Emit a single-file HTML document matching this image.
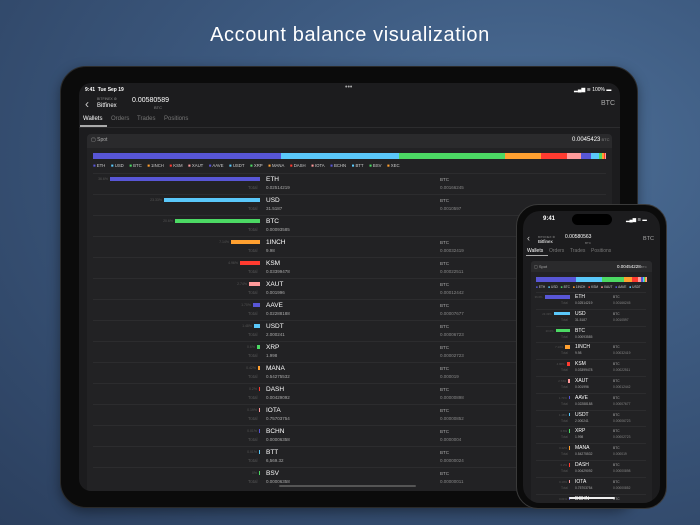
<!DOCTYPE html><html><head><meta charset="utf-8"><style>
*{margin:0;padding:0;box-sizing:border-box}
body{width:700px;height:525px;overflow:hidden;position:relative;font-family:"Liberation Sans",sans-serif;background:radial-gradient(ellipse at 75% 30%,#4d6f97 0%,#3d5a80 40%,#2b3f5e 100%)}
.a{position:absolute}
.t{color:#fff;white-space:nowrap}
#leg span.i{margin-right:5.5px}
#pleg span.i{margin-right:3px}
</style></head><body>
<div class="a t" style="left:0;width:700px;top:24px;text-align:center;font-size:20px;letter-spacing:.6px">Account balance visualization</div>
<!-- iPad -->
<div class="a" style="left:60px;top:66px;width:578px;height:442px;background:#0b0b0b;border-radius:26px;box-shadow:0 4px 12px rgba(0,0,0,.4);border:1px solid #2a2a2a"></div>
<div class="a" style="left:79px;top:83px;width:541px;height:408px;background:#1c1c1e;border-radius:12px;overflow:hidden" id="ip">
 <div class="a t" style="left:6px;top:4px;font-size:5px;font-weight:bold">9:41 &nbsp;Tue Sep 19</div>
 <div class="a t" style="left:266px;top:1px;font-size:7px;color:#aaa">•••</div>
 <div class="a t" style="left:495px;top:4px;font-size:5px">▂▄▆ ≋ 100% ▬</div>
 <div class="a t" style="left:6px;top:14px;font-size:12px;color:#ccc">‹</div>
 <div class="a t" style="left:18px;top:14px;font-size:3.5px;color:#888">BITFINEX ⚙</div>
 <div class="a t" style="left:18px;top:20px;font-size:6px">Bitfinex</div>
 <div class="a t" style="left:53px;top:14px;font-size:7px">0.00580589</div>
 <div class="a t" style="left:75px;top:22px;font-size:4px;color:#888">BTC</div>
 <div class="a t" style="left:522px;top:17px;font-size:7px;color:#aaa">BTC</div>
 <div class="a t" style="left:4px;top:33px;font-size:6px">Wallets</div>
 <div class="a t" style="left:32px;top:33px;font-size:6px;color:#777">Orders</div>
 <div class="a t" style="left:58px;top:33px;font-size:6px;color:#777">Trades</div>
 <div class="a t" style="left:85px;top:33px;font-size:6px;color:#777">Positions</div>
 <div class="a" style="left:1px;top:42px;width:27px;height:1.5px;background:#aaa"></div>
 <div class="a" style="left:0;top:44px;width:541px;height:1px;background:#2c2c2e"></div>
 <div class="a" style="left:8px;top:51px;width:525px;height:360px;background:#222224;border-radius:4px"></div>
 <div class="a" style="left:8px;top:51px;width:525px;height:14px;background:#2a2a2c;border-radius:4px 4px 0 0"></div>
 <div class="a t" style="left:12px;top:54px;font-size:5px;color:#aaa">▢ Spot</div>
 <div class="a t" style="left:493px;top:54px;font-size:6px">0.0045423<span style="font-size:4px;color:#888"> BTC</span></div>
 <div class="a" id="bigbar" style="left:14px;top:70px;width:513px;height:6px;display:flex"></div>
 <div class="a t" id="leg" style="left:14px;top:80px;font-size:4.3px;color:#ccc"></div>
 <div id="rows"></div>
 <div class="a" style="left:200px;top:402px;width:137px;height:2px;background:#555;border-radius:1px"></div>
</div>
<!-- phone -->
<div class="a" style="left:516px;top:204px;width:151px;height:305px;background:#0b0b0b;border-radius:22px;border:1.5px solid #3a3a3a"></div>
<div class="a" style="left:523px;top:211px;width:137px;height:292px;background:#1c1c1e;border-radius:17px;overflow:hidden">
 <div class="a t" style="left:20px;top:5px;font-size:6px;font-weight:bold">9:41</div>
 <div class="a" style="left:49px;top:3px;width:40px;height:11px;background:#000;border-radius:6px"></div>
 <div class="a t" style="left:103px;top:6px;font-size:4.5px">▂▄▆ ≋ ▬</div>
 <div class="a t" style="left:4px;top:22px;font-size:9px;color:#ccc">‹</div>
 <div class="a t" style="left:15px;top:24px;font-size:3px;color:#888">BITFINEX ⚙</div>
 <div class="a t" style="left:15px;top:28px;font-size:4.5px">Bitfinex</div>
 <div class="a t" style="left:42px;top:23px;font-size:5px">0.00580563</div>
 <div class="a t" style="left:62px;top:30px;font-size:3px;color:#888">BTC</div>
 <div class="a t" style="left:120px;top:25px;font-size:5.5px;color:#aaa">BTC</div>
 <div class="a t" style="left:4px;top:37px;font-size:5px">Wallets</div>
 <div class="a t" style="left:26px;top:37px;font-size:5px;color:#777">Orders</div>
 <div class="a t" style="left:47px;top:37px;font-size:5px;color:#777">Trades</div>
 <div class="a t" style="left:68px;top:37px;font-size:5px;color:#777">Positions</div>
 <div class="a" style="left:3px;top:44px;width:22px;height:1px;background:#aaa"></div>
 <div class="a" style="left:8px;top:50px;width:121px;height:250px;background:#222224;border-radius:3px"></div>
 <div class="a" style="left:8px;top:50px;width:121px;height:11px;background:#2a2a2c;border-radius:3px 3px 0 0"></div>
 <div class="a t" style="left:11px;top:53px;font-size:4px;color:#aaa">▢ Spot</div>
 <div class="a t" style="left:94px;top:53px;font-size:4.5px">0.00454228<span style="font-size:3px;color:#888">BTC</span></div>
 <div class="a" id="pbar" style="left:13px;top:66px;width:110px;height:5px;display:flex"></div>
 <div class="a t" id="pleg" style="left:13px;top:74px;font-size:3.2px;color:#ccc"></div>
 <div id="prows"></div>
 <div class="a" style="left:46px;top:286px;width:46px;height:2px;background:#eee;border-radius:1px"></div>
</div>
<script>
var C={ETH:'#5856d6',USD:'#5ac8fa',BTC:'#4cd964','1INCH':'#ffa030',KSM:'#ff3b30',XAUT:'#ff9a9a',AAVE:'#5856d6',USDT:'#5ac8fa',XRP:'#4cd964',MANA:'#ffa030',DASH:'#ff3b30',IOTA:'#ff9a9a',BCHN:'#5856d6',BTT:'#5ac8fa',BSV:'#4cd964',XEC:'#ffa030'};
var R=[['ETH','36.6%',150,'0.02514219','0.00166245'],['USD','23.33%',96,'31.5187','0.0010597'],['BTC','20.6%',85,'0.00093585',''],['1INCH','7.14%',29,'9.98','0.00032419'],['KSM','4.96%',20,'0.03399478','0.00022511'],['XAUT','2.74%',11,'0.001996','0.00012442'],['AAVE','1.70%',7,'0.02288188','0.00007677'],['USDT','1.48%',6,'2.000241','0.00006723'],['XRP','0.6%',3,'1.998','0.00002723'],['MANA','0.42%',2,'0.54275532','0.000019'],['DASH','0.2%',1,'0.00429092','0.00000898'],['IOTA','0.19%',1,'0.75703754','0.00000852'],['BCHN','0.01%',1,'0.00006358','0.0000004'],['BTT','0.01%',1,'6,569.32','0.00000024'],['BSV','0%',1,'0.00006358','0.00000011']];
var big=[['ETH',188],['USD',118],['BTC',106],['1INCH',36],['KSM',26],['XAUT',14],['AAVE',10],['USDT',8],['XRP',3],['MANA',2],['DASH',1],['IOTA',1]];
var h='';big.forEach(function(b){h+='<div style="width:'+b[1]+'px;background:'+C[b[0]]+'"></div>'});
document.getElementById('bigbar').innerHTML=h;
document.getElementById('pbar').innerHTML=big.map(function(b){return '<div style="width:'+(b[1]*110/513)+'px;background:'+C[b[0]]+'"></div>'}).join('');
var L=['ETH','USD','BTC','1INCH','KSM','XAUT','AAVE','USDT','XRP','MANA','DASH','IOTA','BCHN','BTT','BSV','XEC'];
document.getElementById('leg').innerHTML=L.map(function(k){return '<span class="i"><span style="color:'+C[k]+'">■</span> '+k+'</span>'}).join('');
document.getElementById('pleg').innerHTML=L.slice(0,8).map(function(k){return '<span class="i"><span style="color:'+C[k]+'">■</span> '+k+'</span>'}).join('');
var r='',p='';
R.forEach(function(o,i){var y=90+21*i;
r+='<div class="a" style="left:14px;top:'+y+'px;width:513px;height:1px;background:#2c2c2e"></div>'+
'<div class="a t" style="right:'+(541-181+o[2]+2)+'px;top:'+(y+4)+'px;font-size:3.5px;color:#555">'+o[1]+'</div>'+
'<div class="a" style="left:'+(181-o[2])+'px;top:'+(y+4)+'px;width:'+o[2]+'px;height:4px;background:'+C[o[0]]+'"></div>'+
'<div class="a t" style="left:187px;top:'+(y+3)+'px;font-size:6.5px">'+o[0]+'</div>'+
'<div class="a t" style="left:169px;top:'+(y+12)+'px;font-size:4.5px;color:#555">Total</div>'+
'<div class="a t" style="left:187px;top:'+(y+12)+'px;font-size:4.5px;color:#aaa">'+o[3]+'</div>'+
(o[4]?'<div class="a t" style="left:361px;top:'+(y+4)+'px;font-size:4.5px;color:#aaa">BTC</div><div class="a t" style="left:361px;top:'+(y+12)+'px;font-size:4.5px;color:#888">'+o[4]+'</div>':'');
var q=81+16.8*i,w=Math.max(1,o[2]*0.17);
p+='<div class="a" style="left:13px;top:'+q+'px;width:110px;height:1px;background:#2c2c2e"></div>'+
'<div class="a t" style="right:'+(137-47+w+2)+'px;top:'+(q+3)+'px;font-size:2.8px;color:#555">'+o[1]+'</div>'+
'<div class="a" style="left:'+(47-w)+'px;top:'+(q+3)+'px;width:'+w+'px;height:3.5px;background:'+C[o[0]]+'"></div>'+
'<div class="a t" style="left:52px;top:'+(q+2)+'px;font-size:5px">'+o[0]+'</div>'+
'<div class="a t" style="left:38px;top:'+(q+9)+'px;font-size:3.3px;color:#555">Total</div>'+
'<div class="a t" style="left:52px;top:'+(q+9)+'px;font-size:3.3px;color:#aaa">'+o[3]+'</div>'+
(o[4]?'<div class="a t" style="left:90px;top:'+(q+3)+'px;font-size:3.3px;color:#aaa">BTC</div><div class="a t" style="left:90px;top:'+(q+9)+'px;font-size:3.3px;color:#888">'+o[4]+'</div>':'');
});
document.getElementById('rows').innerHTML=r;document.getElementById('prows').innerHTML=p;
</script>
</body></html>
